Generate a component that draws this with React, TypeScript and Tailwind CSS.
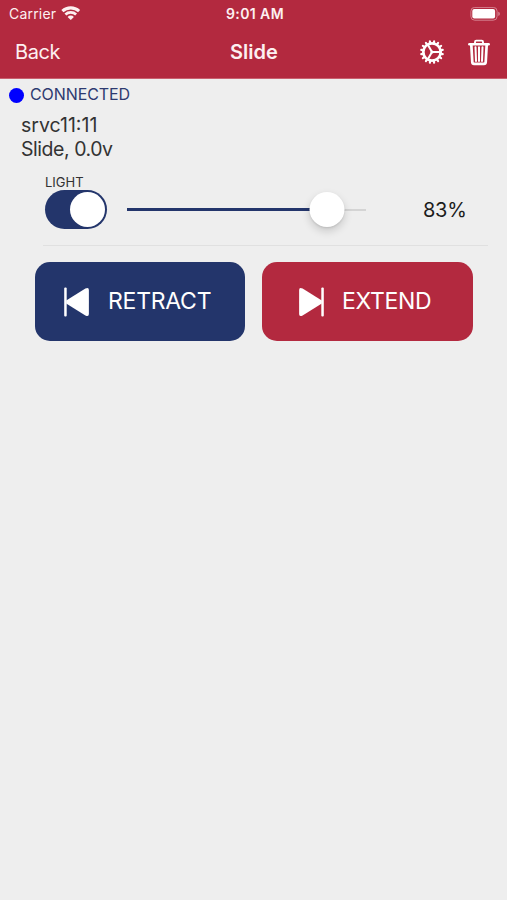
import React, { useState } from 'react';

const TEETH = Array.from({ length: 16 }, (_, i) => i * 22.5 + 11.25);

function WifiIcon() {
  return (
    <svg width="20" height="15" viewBox="0 0 20 15" fill="none" stroke="#fdf0f1">
      <path d="M1.4 5.1 A12.3 12.3 0 0 1 18.1 5.1" strokeWidth="3.1" />
      <path d="M4.4 8.5 A7.8 7.8 0 0 1 15.1 8.5" strokeWidth="2.7" />
      <path d="M9.75 14 L6.6 10.9 A4.4 4.4 0 0 1 12.9 10.9 Z" fill="#fdf0f1" stroke="none" />
    </svg>
  );
}

function BatteryIcon() {
  return (
    <svg width="31" height="14" viewBox="0 0 31 14" fill="none">
      <rect x="0.9" y="0.4" width="26.2" height="12.8" rx="3.8" stroke="#d98b98" strokeWidth="0.9" />
      <rect x="2.3" y="2" width="22.8" height="9.6" rx="2" fill="#fff" />
      <path d="M28.3 4.8 C30.3 5.4 30.3 8.4 28.3 9 Z" fill="#d98b98" />
    </svg>
  );
}

function GearIcon() {
  return (
    <svg width="26" height="26" viewBox="-13 -13 26 26" fill="none" stroke="#fff">
      <circle r="8.7" strokeWidth="2.7" />
      {TEETH.map((a) => (
        <path key={a} d="M9 0 H11" strokeWidth="2.1" strokeLinecap="round" transform={`rotate(${a})`} />
      ))}
      <path d="M0 0 H8 M0 0 L-4 -6.93 M0 0 L-4 6.93" strokeWidth="2" />
      <circle r="1.6" fill="#fff" stroke="none" />
    </svg>
  );
}

function TrashIcon() {
  return (
    <svg width="22" height="27" viewBox="0 0 22 27" fill="none" stroke="#fff">
      <path d="M7 4.6 V2.9 Q7 1.6 8.3 1.6 H13.7 Q15 1.6 15 2.9 V4.6" strokeWidth="1.9" />
      <path d="M1.3 5.2 H20.7" strokeWidth="2.4" strokeLinecap="round" />
      <path d="M3.3 5.6 L4.3 23.2 Q4.4 24.8 6 24.8 H16 Q17.6 24.8 17.7 23.2 L18.7 5.6" strokeWidth="2.7" />
      <path d="M7.5 8.3 L8 22 M11 8.3 V22 M14.5 8.3 L14 22" strokeWidth="2" strokeLinecap="round" />
    </svg>
  );
}

function SkipIcon({ forward = false }: { forward?: boolean }) {
  return (
    <svg width="26" height="30" viewBox="0 0 26 30" fill="#fff" className={forward ? '-scale-x-100' : ''}>
      <rect x="0.2" y="0.6" width="2.5" height="28.8" rx="1" />
      <path d="M2.2 13.4 L21.4 1.5 Q24.9 -0.2 24.9 3 V27 Q24.9 30.2 21.4 28.5 L2.2 16.6 Z" />
    </svg>
  );
}

export default function App() {
  const [light, setLight] = useState(true);
  const [level, setLevel] = useState(83);

  return (
    <div className="flex h-[900px] w-[507px] flex-col overflow-hidden bg-[#eeeeee] font-['Inter','Liberation_Sans',sans-serif]">
      <header className="h-[79px] border-b border-[#c9606f] bg-[#b3293f] text-[#fdf0f1]">
        <div className="grid h-[27px] grid-cols-3 items-center pl-[9px] pr-[6px]">
          <div className="flex items-center gap-[5px] text-[14px] tracking-[0.2px]">
            <span>Carrier</span>
            <WifiIcon />
          </div>
          <span className="text-center text-[14px] font-semibold tracking-[0.4px]">9:01 AM</span>
          <div className="flex justify-end">
            <BatteryIcon />
          </div>
        </div>
        <div className="grid h-[50px] grid-cols-3 items-center pl-[15px] pr-[17px]">
          <button className="text-left text-[20px] tracking-[-0.4px]">Back</button>
          <h1 className="pl-[3px] text-center text-[20px] font-semibold tracking-[0px]">Slide</h1>
          <div className="flex items-center justify-end gap-[23px]">
            <GearIcon />
            <TrashIcon />
          </div>
        </div>
      </header>

      <main>
        <div className="flex h-[31px] items-center gap-[6px] pl-[9px] text-[16px] tracking-[-0.1px] text-[#2d3a70]">
          <span className="mt-px size-[15px] rounded-full bg-[#0000ff]" />
          <span className="-mt-px">CONNECTED</span>
        </div>

        <div className="mt-[3px] pl-[21px] text-[19.5px] leading-[24px] text-[#333333]">
          <p>srvc11:11</p>
          <p className="tracking-[-0.45px]">Slide, 0.0v</p>
        </div>

        <section className="ml-[43px] mr-[19px] mt-[14px] border-b border-[#e0e0e0] pb-[16px] pl-[2px]">
          <p className="h-[15px] text-[13px] leading-[15px] text-[#333333]">LIGHT</p>
          <div className="flex items-center">
            <button
              role="switch"
              aria-checked={light}
              onClick={() => setLight(!light)}
              className={`flex h-[39px] w-[62px] items-center rounded-full px-[2px] ${light ? 'justify-end bg-[#23356b]' : 'bg-[#cccccc]'}`}
            >
              <span className="size-[35px] rounded-full bg-white" />
            </button>
            <div className="relative ml-[20px] flex h-[35px] w-[239px] items-center">
              <div className="h-[2px] w-full bg-[#d4d4d4]">
                <div className="-mt-px h-[3px] bg-[#23356b]" style={{ width: `${level}%` }} />
              </div>
              <span
                className="absolute size-[35px] -translate-x-1/2 rounded-full bg-white shadow-[0_4px_9px_rgba(0,0,0,0.16),0_1px_2px_rgba(0,0,0,0.1)]"
                style={{ left: `${level + 0.7}%` }}
              />
              <input
                type="range"
                aria-label="Light level"
                value={level}
                onChange={(e) => setLevel(Number(e.target.value))}
                className="absolute inset-0 w-full opacity-0"
              />
            </div>
            <span className="ml-[57px] text-[20px] tracking-[-0.3px] text-[#1c1c1c]">{level}%</span>
          </div>
        </section>

        <div className="flex gap-[17px] pl-[35px] pt-[16px]">
          <button className="flex h-[79px] w-[210px] items-center rounded-[15px] bg-[#23356b] pl-[29px] text-[23px] tracking-[-0.25px] text-white">
            <SkipIcon />
            <span className="ml-[18px]">RETRACT</span>
          </button>
          <button className="flex h-[79px] w-[210.5px] items-center rounded-[15px] bg-[#b3293f] pl-[36px] text-[23px] tracking-[-0.3px] text-white">
            <SkipIcon forward />
            <span className="ml-[18px]">EXTEND</span>
          </button>
        </div>
      </main>
    </div>
  );
}
